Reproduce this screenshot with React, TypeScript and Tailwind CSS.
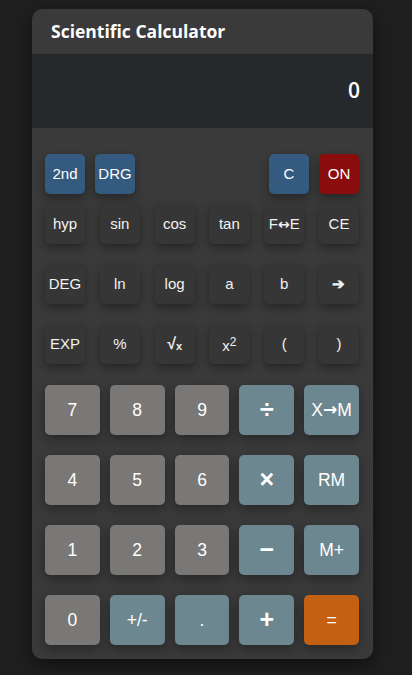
import React from "react";

type Key = {
  label: React.ReactNode;
  kind: "fn" | "blue" | "red" | "num" | "op" | "eq";
  big?: boolean;
};

const kindClass: Record<Key["kind"], string> = {
  fn: "bg-[#363636] text-[#f2f2f2]",
  blue: "bg-[#345a80] text-white",
  red: "bg-[#8b0c0c] text-white",
  num: "bg-[#7a7876] text-white",
  op: "bg-[#6d8790] text-white",
  eq: "bg-[#c46012] text-white",
};

const arrowFont = { fontFamily: '"DejaVu Sans", sans-serif' };

const SmallKey = ({ k }: { k: Key }) => (
  <button
    className={`w-10 h-10 rounded-[5px] flex items-center justify-center text-[15px] shadow-[0_4px_10px_rgba(0,0,0,0.35)] ${kindClass[k.kind]}`}
  >
    {k.label}
  </button>
);

const BigKey = ({ k }: { k: Key }) => (
  <button
    className={`h-[50px] rounded-[5px] flex items-center justify-center shadow-[0_4px_12px_rgba(0,0,0,0.35)] ${
      k.big ? "text-[25px] font-bold" : "text-[17.5px]"
    } ${kindClass[k.kind]}`}
  >
    {k.label}
  </button>
);

const fnRows: Key[][] = [
  [
    { label: "hyp", kind: "fn" },
    { label: "sin", kind: "fn" },
    { label: "cos", kind: "fn" },
    { label: "tan", kind: "fn" },
    {
      label: (
        <span className="flex items-center">
          F
          <span className="font-bold text-[14px]" style={arrowFont}>
            ↔
          </span>
          E
        </span>
      ),
      kind: "fn",
    },
    { label: "CE", kind: "fn" },
  ],
  [
    { label: "DEG", kind: "fn" },
    { label: "ln", kind: "fn" },
    { label: "log", kind: "fn" },
    { label: "a", kind: "fn" },
    { label: "b", kind: "fn" },
    { label: <span className="font-bold text-[15px]">➔</span>, kind: "fn" },
  ],
  [
    { label: "EXP", kind: "fn" },
    { label: "%", kind: "fn" },
    {
      label: (
        <span className="font-bold flex items-end">
          <span className="text-[16px]">√</span>
          <span className="text-[11px] mb-[2px]">x</span>
        </span>
      ),
      kind: "fn",
    },
    {
      label: (
        <span className="pt-[4px]">
          x<sup className="text-[12px] relative -top-[5px]">2</sup>
        </span>
      ),
      kind: "fn",
    },
    { label: "(", kind: "fn" },
    { label: ")", kind: "fn" },
  ],
];

const numRows: Key[][] = [
  [
    { label: "7", kind: "num" },
    { label: "8", kind: "num" },
    { label: "9", kind: "num" },
    { label: "÷", kind: "op", big: true },
    {
      label: (
        <span className="flex items-center">
          X
          <span className="font-bold text-[17px]" style={arrowFont}>
            →
          </span>
          M
        </span>
      ),
      kind: "op",
    },
  ],
  [
    { label: "4", kind: "num" },
    { label: "5", kind: "num" },
    { label: "6", kind: "num" },
    { label: "×", kind: "op", big: true },
    { label: "RM", kind: "op" },
  ],
  [
    { label: "1", kind: "num" },
    { label: "2", kind: "num" },
    { label: "3", kind: "num" },
    { label: "−", kind: "op", big: true },
    { label: "M+", kind: "op" },
  ],
  [
    { label: "0", kind: "num" },
    { label: "+/-", kind: "op" },
    { label: ".", kind: "op" },
    { label: "+", kind: "op", big: true },
    { label: "=", kind: "eq" },
  ],
];

export default function App() {
  return (
    <div
      className="min-h-[675px] w-full bg-[#1f1f1f] pt-[9px] pl-[32px]"
      style={{ fontFamily: '"Liberation Sans", Arial, sans-serif' }}
    >
      <div className="w-[341px] rounded-[10px] bg-[#3a3a3a] shadow-[0_6px_20px_rgba(0,0,0,0.5)] overflow-hidden pb-[14px]">
        {/* Header */}
        <div
          className="h-[45px] flex items-center pl-[19px] text-white text-[17.5px] font-bold"
          style={{ fontFamily: '"Open Sans", sans-serif' }}
        >
          Scientific Calculator
        </div>

        {/* Display */}
        <div
          className="h-[74px] bg-[#25292b] flex items-center justify-end pr-[13px] text-white text-[21px] font-semibold"
          style={{ fontFamily: '"Open Sans", sans-serif' }}
        >
          0
        </div>

        {/* Keys */}
        <div className="pl-[13px] pr-[14px] pt-[26px]">
          <div className="flex justify-between">
            <div className="flex gap-[10px]">
              <SmallKey k={{ label: "2nd", kind: "blue" }} />
              <SmallKey k={{ label: "DRG", kind: "blue" }} />
            </div>
            <div className="flex gap-[10px]">
              <SmallKey k={{ label: "C", kind: "blue" }} />
              <SmallKey k={{ label: "ON", kind: "red" }} />
            </div>
          </div>

          <div className="mt-[10px] flex flex-col gap-5">
            {fnRows.map((row, i) => (
              <div key={i} className="flex justify-between">
                {row.map((k, j) => (
                  <SmallKey key={j} k={k} />
                ))}
              </div>
            ))}
          </div>

          <div className="mt-[21px] grid grid-cols-5 gap-x-[10px] gap-y-5">
            {numRows.flat().map((k, i) => (
              <BigKey key={i} k={k} />
            ))}
          </div>
        </div>
      </div>
    </div>
  );
}
